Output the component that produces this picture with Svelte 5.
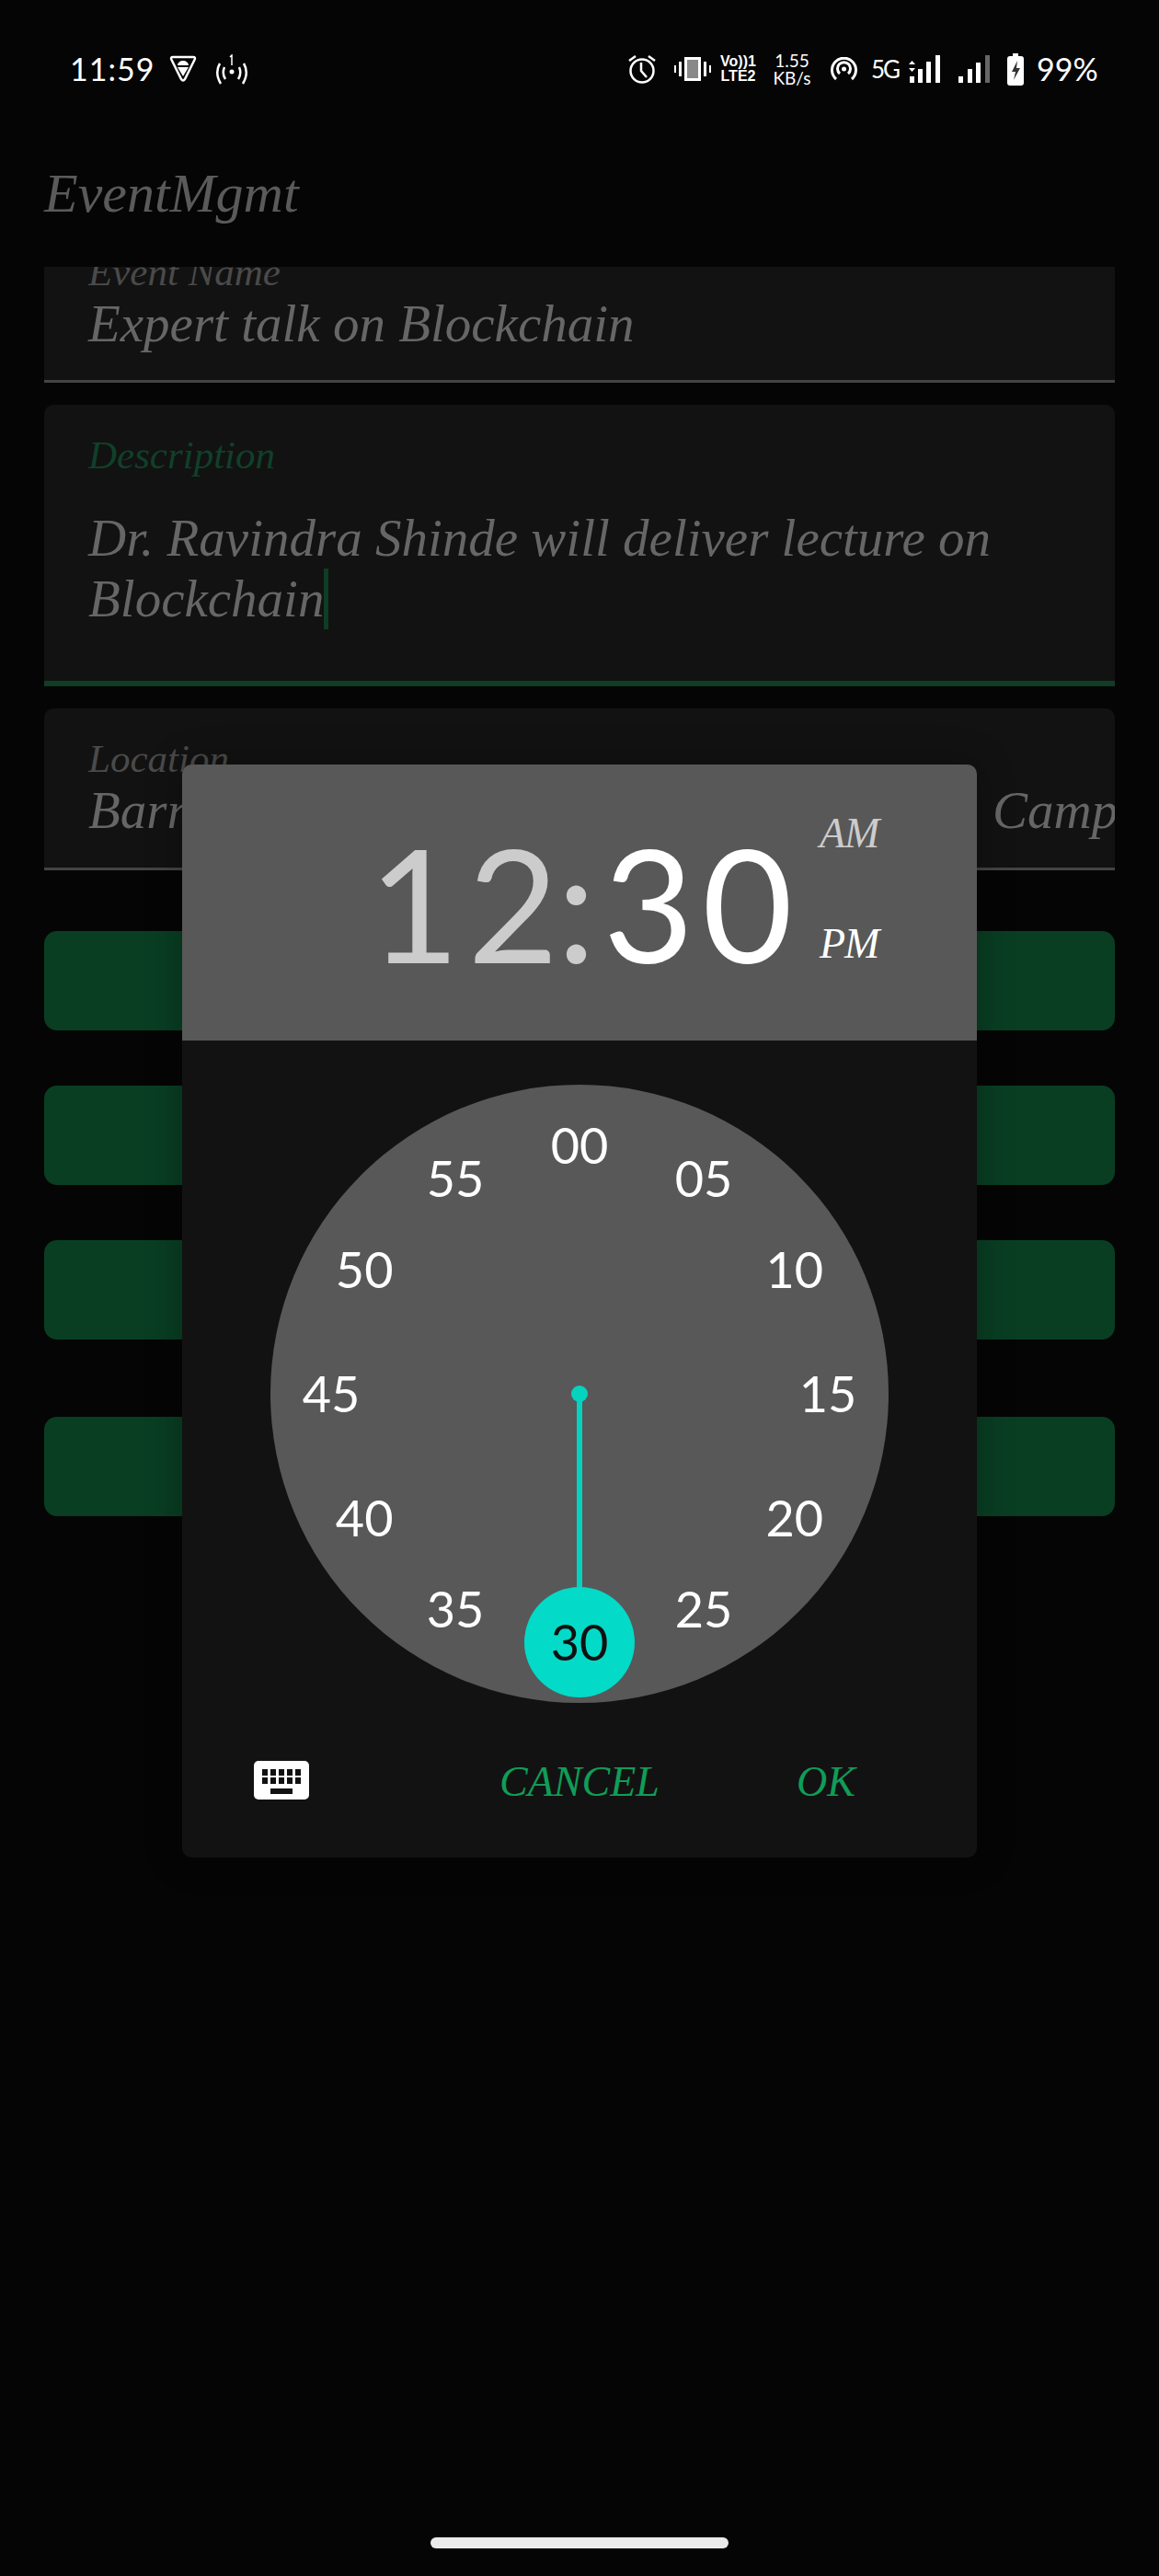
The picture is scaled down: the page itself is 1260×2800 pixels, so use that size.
<script>
    // minute labels on the dial, clockwise from the top
    const minutes = ['00', '05', '10', '15', '20', '25', '35', '40', '45', '50', '55'];
    const dialR = 270;

    function pos(m) {
        const a = (Number(m) / 60) * Math.PI * 2;
        return `left:${336 + Math.sin(a) * dialR}px;top:${336 - Math.cos(a) * dialR}px`;
    }
</script>

<div class="phone">
    <div class="status">
        <div class="left">
            <span class="time">11:59</span>
            <svg class="shield" width="30" height="30" viewBox="0 0 30 30">
                <path d="M4 2h22q3 0 1.500 3L17 26q-2 3-4 0L2.500 5Q1 2 4 2z" fill="none" stroke="#fff" stroke-width="2.500" />
                <path d="M9 11a6 5 0 0 1 12 0zM9 13h12l-6 10z" fill="#fff" />
            </svg>
            <svg class="cast" width="36" height="33" viewBox="0 0 36 33" fill="none" stroke="#fff" stroke-width="2.500">
                <path d="M5 10q-6 10 1 22M10 14q-3 7 1 13M31 10q6 10-1 22M26 14q3 7-1 13" />
                <circle cx="18" cy="19" r="2.500" fill="#fff" stroke="none" />
                <path d="M16 3l2-2v11" stroke-width="1.500" />
            </svg>
        </div>
        <div class="right">
            <svg width="30" height="32" viewBox="0 0 30 32" fill="none" stroke="#fff" stroke-width="2.500">
                <circle cx="15" cy="18" r="12.500" />
                <path d="M14 9v9l6 7M1 7l7-5M29 7l-7-5" />
            </svg>
            <svg class="vib" width="40" height="26" viewBox="0 0 40 26" fill="#fff">
                <path d="M11 0h18v26H11zM14 3v20h12V3z" fill-rule="evenodd" />
                <rect x="14" y="3" width="12" height="20" fill="#888" />
                <rect x="0" y="9" width="2" height="8" /><rect x="5" y="5" width="3" height="16" />
                <rect x="32" y="5" width="3" height="16" /><rect x="38" y="9" width="2" height="8" />
            </svg>
            <div class="volte"><span>Vo))1</span><span>LTE2</span></div>
            <div class="speed"><span>1.55</span><span>KB/s</span></div>
            <svg class="hot" width="29" height="26" viewBox="0 0 29 26" fill="none" stroke="#fff" stroke-width="3">
                <path d="M6 24a13 13 0 1 1 17 0M10 18a7 7 0 1 1 9 0" />
                <circle cx="14.500" cy="13" r="2.500" fill="#fff" stroke="none" />
            </svg>
            <span class="fiveg">5G</span>
            <svg class="sig1" width="34" height="30" viewBox="0 0 34 30" fill="#fff">
                <path d="M3.500 6l3.500 4H0zM3.500 18l3.500-4H0z" />
                <rect x="1" y="23" width="5" height="7" /><rect x="10" y="15" width="5" height="15" />
                <rect x="19" y="7" width="5" height="23" /><rect x="29" y="0" width="5" height="30" />
            </svg>
            <svg class="sig2" width="34" height="30" viewBox="0 0 34 30" fill="#fff">
                <rect x="0" y="23" width="5" height="7" /><rect x="10" y="15" width="5" height="15" />
                <rect x="19" y="8" width="5" height="22" /><rect x="29" y="0" width="5" height="30" fill="#666" />
            </svg>
            <svg class="batt" width="18" height="35" viewBox="0 0 18 35">
                <path d="M3 3h3V0h6v3h3q3 0 3 3v26q0 3-3 3H3q-3 0-3-3V6q0-3 3-3z" fill="#fff" />
                <path d="M11 8l-6 12h4l-2 9 7-13h-4z" fill="#333" />
            </svg>
            <span class="pct">99%</span>
        </div>
    </div>

    <div class="appbar">EventMgmt</div>

    <div class="form">
        <div class="field first">
            <span class="label">Event Name</span>
            <span class="value">Expert talk on Blockchain</span>
        </div>
        <div class="field desc">
            <span class="label focus">Description</span>
            <p class="value">Dr. Ravindra Shinde will deliver lecture on<br />Blockchain<i class="caret"></i></p>
        </div>
        <div class="field loc">
            <span class="label">Location</span>
            <span class="value">Barrister Nath Pai Memorial Auditorium, Campus</span>
        </div>
        <div class="btn one"></div>
        <div class="btn"></div>
        <div class="btn"></div>
        <div class="btn last"></div>
    </div>

    <div class="dialog">
        <div class="head">
            <div class="clock">
                <span class="dim">1</span><span class="dim two-d">2</span><span class="dim colon">:</span><span class="mins">30</span>
            </div>
            <div class="ampm">
                <span class="dim">AM</span>
                <span>PM</span>
            </div>
        </div>
        <div class="body">
            <div class="dial">
                {#each minutes as m}
                    <span class="num" style={pos(m)}>{m}</span>
                {/each}
                <i class="dot"></i>
                <i class="hand"></i>
                <span class="sel">30</span>
            </div>
        </div>
        <div class="actions">
            <svg width="60" height="42" viewBox="0 0 60 42">
                <rect width="60" height="42" rx="5" fill="#fff" />
                <g fill="#111">
                    <rect x="9" y="9" width="6" height="7" /><rect x="18" y="9" width="6" height="7" /><rect x="27" y="9" width="6" height="7" /><rect x="36" y="9" width="6" height="7" /><rect x="45" y="9" width="6" height="7" />
                    <rect x="9" y="18" width="6" height="7" /><rect x="18" y="18" width="6" height="7" /><rect x="27" y="18" width="6" height="7" /><rect x="36" y="18" width="6" height="7" /><rect x="45" y="18" width="6" height="7" />
                    <rect x="18" y="30" width="24" height="6" />
                </g>
            </svg>
            <span class="act cancel">CANCEL</span>
            <span class="act ok">OK</span>
        </div>
    </div>

    <div class="home"></div>
</div>

<style>
:global(body) { margin: 0; background: #050505; }
.phone {
    position: relative; width: 1260px; height: 2800px;
    background: #050505; overflow: hidden;
    font-family: "Liberation Serif", serif; font-style: italic;
}
.status {
    height: 150px; padding: 0 71px 0 76px; box-sizing: border-box;
    display: flex; justify-content: space-between; align-items: center;
    color: #fff; font-family: Lato, sans-serif; font-style: normal;
}
.left, .right { display: flex; align-items: center; }
.time { font-size: 34px; letter-spacing: 1px; width: 88px; white-space: nowrap; line-height: 1; }
.shield { margin-left: 20px; }
.cast { margin-left: 20px; }
.vib { margin-left: 20px; }
.volte, .speed { display: flex; flex-direction: column; align-items: center; white-space: nowrap; }
.volte {
    width: 39px; margin-left: 10px; font-size: 16px; line-height: 16px; font-weight: 700;
    font-family: "Liberation Sans", sans-serif;
}
.speed { width: 44px; margin-left: 17px; font-size: 19px; line-height: 19px; }
.hot { margin-left: 20px; }
.fiveg { width: 29px; margin-left: 15px; font-size: 26px; letter-spacing: -2px; line-height: 1; white-space: nowrap; }
.sig1 { margin-left: 12px; }
.sig2 { margin-left: 20px; }
.batt { margin-left: 19px; }
.pct { width: 62px; margin-left: 14px; font-size: 34px; line-height: 1; white-space: nowrap; }

.appbar {
    height: 140px; padding: 0 0 20px 48px; box-sizing: border-box;
    display: flex; align-items: center;
    font-size: 60px; color: #5a5a5a;
}
.form { padding: 0 48px; display: flex; flex-direction: column; }
.field {
    background: #121212; border-radius: 10px 10px 0 0;
    padding: 0 47px 0 48px; overflow: hidden;
    display: flex; flex-direction: column;
    box-sizing: border-box;
}
.label { font-size: 43px; color: #4a4a4a; line-height: 40px; }
.value { font-size: 57px; margin: 0; line-height: 64px; color: #666; white-space: nowrap; }
.first { height: 126px; border-radius: 0; border-bottom: 3px solid #444; }
.first .label { margin-top: -14px; }
.first .value { margin-top: 4px; }
.desc {
    height: 306px; margin-top: 24px; padding-top: 35px;
    border-bottom: 6px solid #0f3d25;
}
.focus { color: #10402a; }
.desc .value { margin-top: 37px; line-height: 66px; }
.caret {
    display: inline-block; width: 5px; height: 66px;
    background: #0f3d25; vertical-align: top;
}
.loc {
    height: 176px; margin-top: 24px; padding-top: 35px;
    border-bottom: 3px solid #444;
}
.loc .value { margin-top: 4px; word-spacing: 3px; }
.btn { height: 108px; margin-top: 60px; border-radius: 14px; background: #093e23; }
.btn.one { margin-top: 66px; }
.btn.last { margin-top: 84px; }

/* time picker over the dimmed form */
.dialog {
    position: absolute; left: 198px; top: 831px; width: 864px; height: 1188px;
    background: #121212; border-radius: 10px; overflow: hidden;
    display: flex; flex-direction: column;
    box-shadow: 0 0 40px rgba(0,0,0,.3);
}
.head {
    height: 300px; background: #585858; color: #fff;
    display: flex; align-items: center;
    position: relative;
}
.clock {
    font-family: Lato, sans-serif; font-style: normal;
    font-size: 170px; line-height: 1; display: flex; margin-left: 203px;
}
.two-d { margin-left: 9px; }
.colon { margin: 0 8px 0 -2px; }
.mins { letter-spacing: 9px; }
.dim { color: #cccccc; }
.ampm {
    position: absolute; left: 693px; top: 49px;
    display: flex; flex-direction: column; gap: 68px;
    font-size: 46px; line-height: 52px; letter-spacing: -1px;
}
.body { padding-top: 48px; display: flex; justify-content: center; }
.dial {
    position: relative; width: 672px; height: 672px;
    border-radius: 50%; background: #585858;
    font-family: Lato, sans-serif; font-style: normal;
}
.num {
    position: absolute; transform: translate(-50%, -50%);
    font-size: 54px; color: #fff; line-height: 1;
}
.dot {
    position: absolute; left: 327px; top: 327px;
    width: 18px; height: 18px; border-radius: 50%; background: #04d3c0;
}
.hand {
    position: absolute; left: 333px; top: 336px;
    width: 6px; height: 220px; background: #04d3c0;
}
.sel {
    position: absolute; left: 276px; top: 546px;
    width: 120px; height: 120px; border-radius: 50%;
    background: #04dac8; color: #111;
    display: flex; align-items: center; justify-content: center;
    font-size: 54px; padding-bottom: 2px; box-sizing: border-box;
}
.actions {
    position: relative; flex: 1;
    padding: 63px 0 0 78px;
}
.act {
    position: absolute; top: 58px;
    font-size: 46px; line-height: 56px; color: #0f9d58;
}
.cancel { left: 345px; }
.ok { left: 668px; }
.home {
    position: absolute; left: 468px; top: 2758px;
    width: 324px; height: 12px; border-radius: 6px; background: #ebebeb;
}
</style>
